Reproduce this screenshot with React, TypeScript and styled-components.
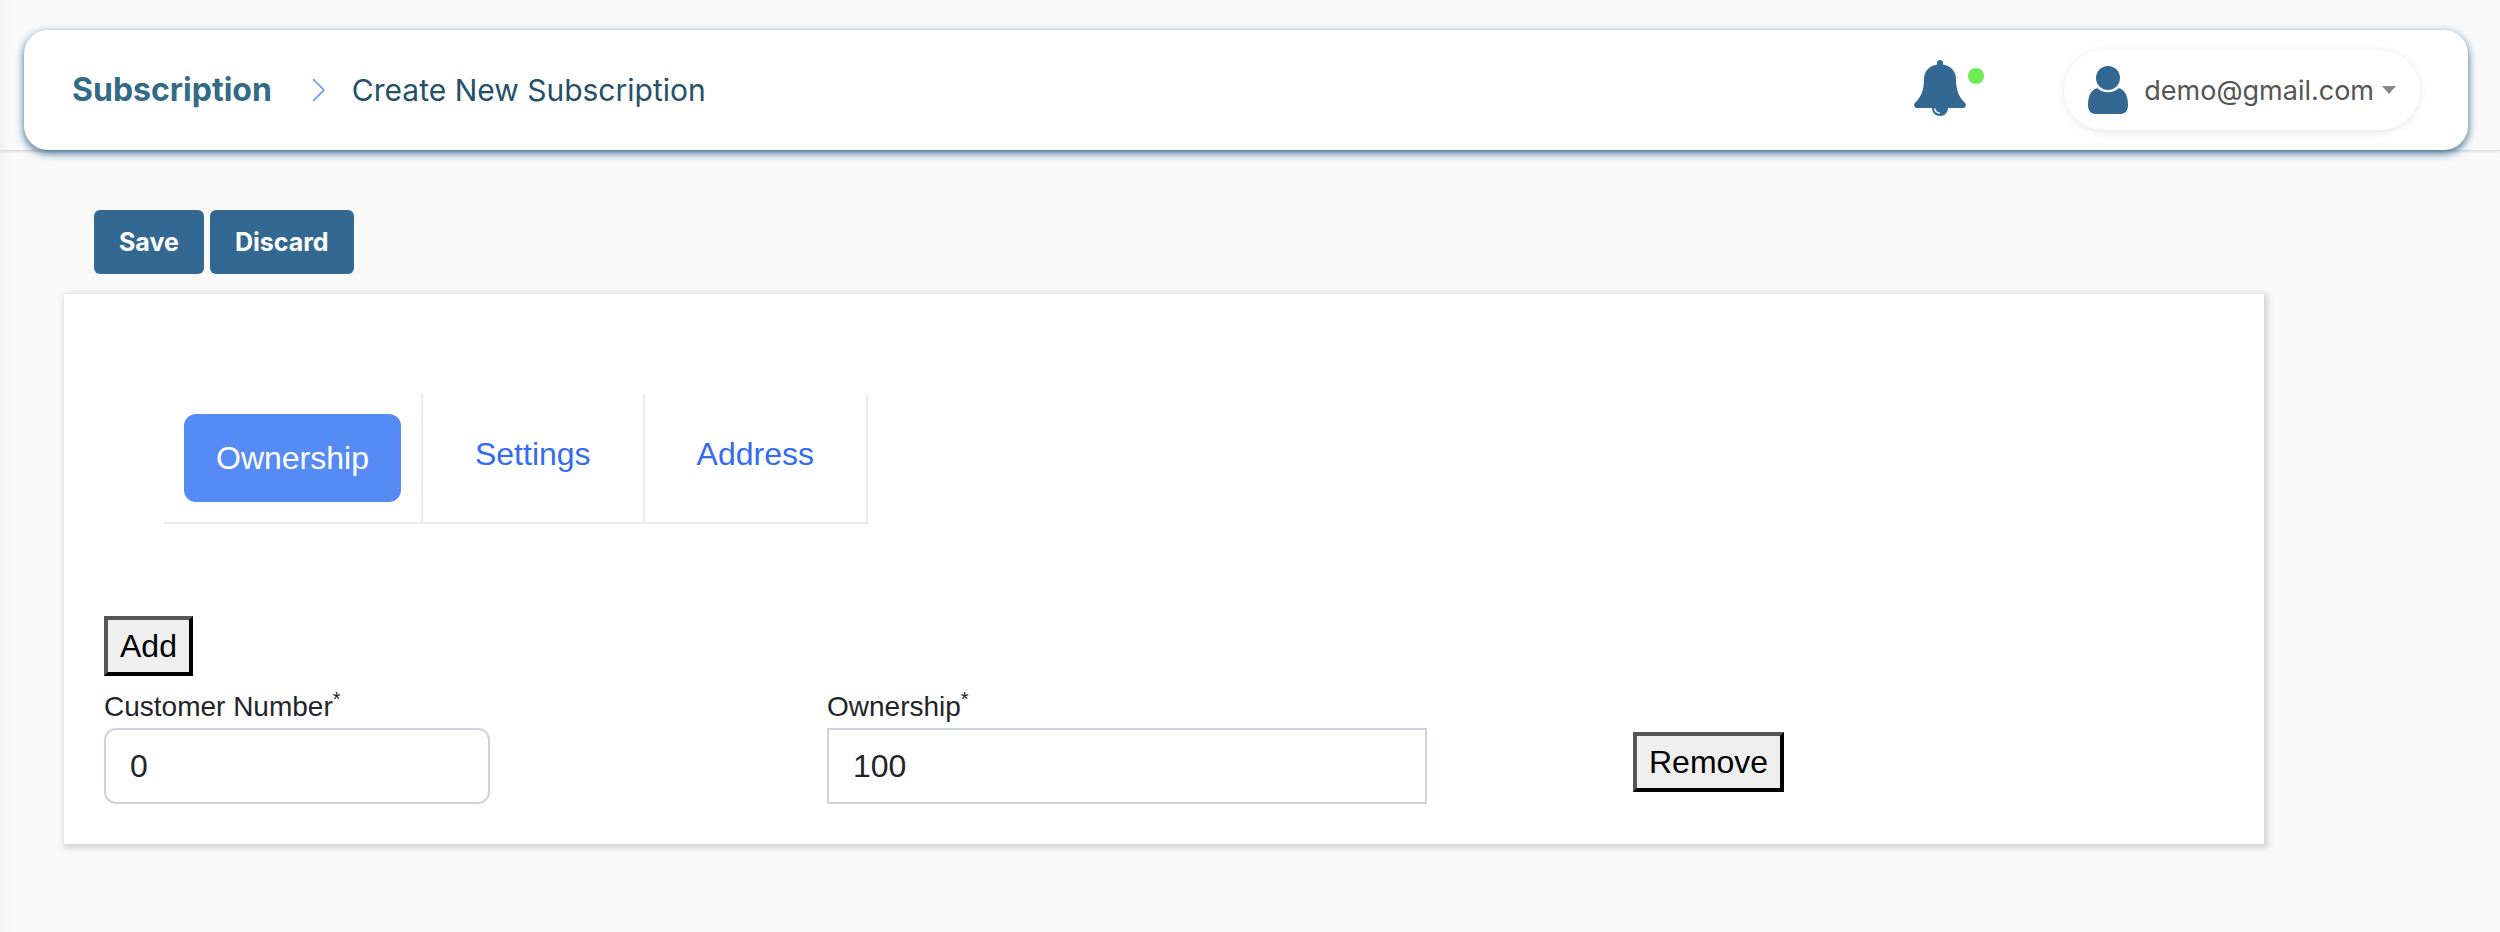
import { useState } from "react";
import styled, { createGlobalStyle, css } from "styled-components";

const brand = "#336892";
const ui = `Inter, "Liberation Sans", sans-serif`;
const body = `"Liberation Sans", Arial, sans-serif`;

const GlobalStyle = createGlobalStyle`
  *, *::before, *::after { box-sizing: border-box; }
  body {
    margin: 0;
    background: #f9f9f9;
    color: #212529;
    font-family: ${body};
    font-size: 32px;
    line-height: 48px;
  }
`;

const Page = styled.div`
  min-height: 100vh;
  box-shadow: inset 16px 0 16px -16px rgba(0, 0, 0, 0.05);
`;

const TopBand = styled.div`
  padding: 30px 32px 0 24px;
  box-shadow: 0 1px 3px rgba(0, 0, 0, 0.18);
`;

const Header = styled.header`
  display: flex;
  align-items: center;
  justify-content: space-between;
  height: 120px;
  padding: 0 48px;
  border-radius: 24px;
  background: #fff;
  box-shadow: 0 3px 8px ${brand};
  font-family: ${ui};
`;

const Breadcrumb = styled.nav`
  display: flex;
  align-items: center;
  gap: 26px;
`;

const CrumbLink = styled.a`
  margin-right: 14px;
  color: #336b87;
  font-size: 32px;
  font-weight: 700;
  text-decoration: none;
`;

const CrumbCurrent = styled.span`
  color: #24506b;
  font-size: 30px;
`;

const Account = styled.div`
  display: flex;
  align-items: center;
`;

const IconButton = styled.button`
  position: relative;
  display: flex;
  margin: 0 98px 4px 0;
  padding: 0;
  border: 0;
  background: none;
`;

const StatusDot = styled.span`
  position: absolute;
  top: 8px;
  right: -18px;
  width: 16px;
  height: 16px;
  border-radius: 50%;
  background: #6eec52;
`;

const UserButton = styled.button`
  display: flex;
  align-items: center;
  height: 80px;
  padding: 0 24px;
  border: 0;
  border-radius: 40px;
  background: #fff;
  box-shadow: 0 2px 8px rgba(0, 0, 0, 0.1);
  color: #555;
  font-family: inherit;
  font-size: 27px;
`;

const UserName = styled.span`
  margin: 0 8px 0 16px;
`;

const Main = styled.main`
  padding: 60px 0 88px 64px;
`;

const Actions = styled.div`
  display: flex;
  gap: 6px;
  margin: 0 0 20px 30px;
`;

const ActionButton = styled.button`
  height: 64px;
  padding: 0 25px;
  border: 0;
  border-radius: 6px;
  background: ${brand};
  color: #fff;
  font-family: ${ui};
  font-size: 25px;
  font-weight: 700;
`;

const Panel = styled.section`
  width: calc((100% + 64px) * 0.88);
  padding: 100px 40px 40px;
  background: #fff;
  box-shadow: 2px 2px 6px 2px rgba(0, 0, 0, 0.15);
`;

const Tabs = styled.div`
  display: flex;
  width: max-content;
  margin: 0 0 92px 60px;
  border-bottom: 2px solid #e9ebed;
`;

const TabSlot = styled.div`
  height: 128px;
  border-right: 2px solid #e9ebed;
`;

const Tab = styled.button<{ $active: boolean }>`
  border: 0;
  font: inherit;
  ${({ $active }) =>
    $active
      ? css`
          margin: 20px;
          padding: 20px 32px;
          border-radius: 12px;
          background: #568bf6;
          color: #fff;
        `
      : css`
          padding: 36px 52px;
          background: none;
          color: #346bf3;
        `}
`;

const PlainButton = styled.button`
  height: 60px;
  padding: 2px 12px;
  border: 4px solid;
  border-color: #555 #000 #000 #555;
  background: #efefef;
  color: #000;
  font: inherit;
`;

const OwnerRow = styled.div`
  display: grid;
  grid-template-columns: 723fr 806fr 591fr;
  align-items: end;
  margin-top: 10px;
`;

const Field = styled.div`
  display: flex;
  flex-direction: column;
`;

const Label = styled.label`
  font-size: 28px;
  line-height: 42px;
`;

const Required = styled.sup`
  position: relative;
  top: -10px;
  font-size: 20px;
  line-height: 0;
  vertical-align: baseline;
`;

const TextInput = styled.input<{ $size: "short" | "long" }>`
  width: ${({ $size }) => ($size === "short" ? "386px" : "600px")};
  height: 76px;
  padding: 0 24px;
  border: 2px solid #ced4da;
  border-radius: ${({ $size }) => ($size === "short" ? "12px" : "0")};
  background: #fff;
  color: inherit;
  font: inherit;
`;

const RemoveCell = styled.div`
  display: flex;
  padding-bottom: 12px;
`;

const ChevronIcon = () => (
  <svg width="14" height="24" viewBox="0 0 14 24" fill="none" stroke="#5b93f7" strokeWidth="1.6" aria-hidden="true">
    <path d="M1.500 1.500 12 12 1.500 22.500" strokeLinecap="round" strokeLinejoin="round" />
  </svg>
);

const BellIcon = () => (
  <svg width="52" height="56" viewBox="0 0 52 56" aria-hidden="true">
    <path
      fill={brand}
      d="M26 0c-1.800 0-3 1.300-3 3v1.400C15.500 5.600 10 11 10 18.500 10 30 7.500 36.500 1.300 42.500-.9 44.800.1 48 3.500 48H18c.1 4.600 3.500 8 8 8s7.900-3.400 8-8h14.500c3.400 0 4.400-3.200 2.200-5.500C44.500 36.500 42 30 42 18.500 42 11 36.500 5.600 29 4.400V3c0-1.700-1.200-3-3-3z"
    />
    <path d="M20.800 48.500c.3 2.600 2.200 4.400 5 4.800" fill="none" stroke="#fff" strokeWidth="1.500" />
  </svg>
);

const UserIcon = () => (
  <svg width="40" height="48" viewBox="0 0 40 48" fill={brand} aria-hidden="true">
    <circle cx="20" cy="12" r="12" />
    <path d="M9.500 22.300C3.500 23.200 0 30 0 38.500 0 44.500 2.600 48 7.500 48h25c4.900 0 7.500-3.500 7.500-9.500 0-8.500-3.500-15.300-9.500-16.200-2.800 2.500-6.300 4-10.500 4s-7.700-1.500-10.500-4z" />
  </svg>
);

const CaretIcon = () => (
  <svg width="14" height="8" viewBox="0 0 14 8" fill="#888" aria-hidden="true">
    <path d="M0 0h14L7 8z" />
  </svg>
);

const tabs = ["Ownership", "Settings", "Address"];

export default function App() {
  const [active, setActive] = useState("Ownership");

  return (
    <Page>
      <GlobalStyle />
      <TopBand>
        <Header>
          <Breadcrumb aria-label="Breadcrumb">
            <CrumbLink href="#subscription">Subscription</CrumbLink>
            <ChevronIcon />
            <CrumbCurrent>Create New Subscription</CrumbCurrent>
          </Breadcrumb>
          <Account>
            <IconButton type="button" aria-label="Notifications">
              <BellIcon />
              <StatusDot />
            </IconButton>
            <UserButton type="button">
              <UserIcon />
              <UserName>demo@gmail.com</UserName>
              <CaretIcon />
            </UserButton>
          </Account>
        </Header>
      </TopBand>
      <Main>
        <Actions>
          <ActionButton type="button">Save</ActionButton>
          <ActionButton type="button">Discard</ActionButton>
        </Actions>
        <Panel>
          <Tabs role="tablist">
            {tabs.map((name) => (
              <TabSlot key={name}>
                <Tab type="button" role="tab" aria-selected={active === name} $active={active === name} onClick={() => setActive(name)}>
                  {name}
                </Tab>
              </TabSlot>
            ))}
          </Tabs>
          <PlainButton type="button">Add</PlainButton>
          <OwnerRow>
            <Field>
              <Label htmlFor="customer-number">
                Customer Number<Required>*</Required>
              </Label>
              <TextInput id="customer-number" $size="short" defaultValue="0" />
            </Field>
            <Field>
              <Label htmlFor="ownership">
                Ownership<Required>*</Required>
              </Label>
              <TextInput id="ownership" $size="long" defaultValue="100" />
            </Field>
            <RemoveCell>
              <PlainButton type="button">Remove</PlainButton>
            </RemoveCell>
          </OwnerRow>
        </Panel>
      </Main>
    </Page>
  );
}
